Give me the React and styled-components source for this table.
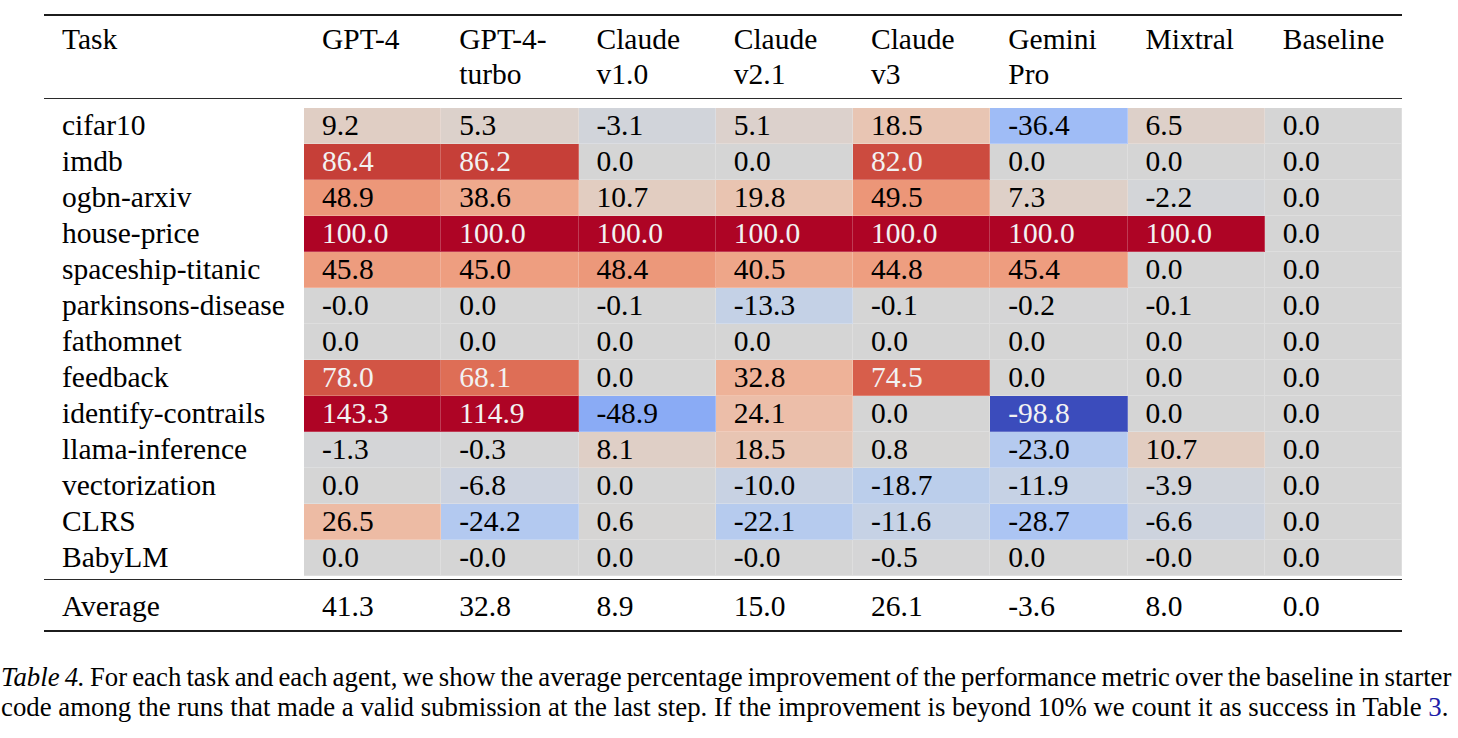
import React from "react";
import styled, { createGlobalStyle } from "styled-components";

const SERIF = `"Liberation Serif", "Times New Roman", Tinos, serif`;

const Global = createGlobalStyle`
  html, body { margin: 0; padding: 0; background: #ffffff; }
  body { font-family: ${SERIF}; color: #000; }
`;

const STOPS = [
  [59, 76, 192], [68, 90, 204], [77, 104, 215], [87, 117, 225], [98, 130, 234],
  [108, 142, 241], [119, 154, 247], [130, 165, 251], [141, 176, 254], [152, 185, 255],
  [163, 194, 255], [174, 201, 253], [184, 208, 249], [194, 213, 244], [204, 217, 238],
  [213, 219, 230], [221, 221, 221], [229, 216, 209], [236, 211, 197], [241, 204, 185],
  [245, 196, 173], [247, 187, 160], [247, 177, 148], [247, 166, 135], [244, 154, 123],
  [241, 141, 111], [236, 127, 99], [229, 112, 88], [222, 96, 77], [213, 80, 66],
  [203, 62, 56], [192, 40, 47], [180, 4, 38],
];

function coolwarm(v) {
  let t = (v + 100) / 200;
  t = Math.max(0, Math.min(1, t));
  const pos = t * (STOPS.length - 1);
  const i = Math.min(STOPS.length - 2, Math.floor(pos));
  const f = pos - i;
  const a = STOPS[i];
  const b = STOPS[i + 1];
  const k = 0.965;
  const c = a.map((x, j) => Math.round((x + (b[j] - x) * f) * k));
  return `rgb(${c[0]}, ${c[1]}, ${c[2]})`;
}

const MODELS = [
  ["GPT-4"], ["GPT-4-", "turbo"], ["Claude", "v1.0"], ["Claude", "v2.1"],
  ["Claude", "v3"], ["Gemini", "Pro"], ["Mixtral"], ["Baseline"],
];

const ROWS = [
  ["cifar10", ["9.2", "5.3", "-3.1", "5.1", "18.5", "-36.4", "6.5", "0.0"]],
  ["imdb", ["86.4", "86.2", "0.0", "0.0", "82.0", "0.0", "0.0", "0.0"]],
  ["ogbn-arxiv", ["48.9", "38.6", "10.7", "19.8", "49.5", "7.3", "-2.2", "0.0"]],
  ["house-price", ["100.0", "100.0", "100.0", "100.0", "100.0", "100.0", "100.0", "0.0"]],
  ["spaceship-titanic", ["45.8", "45.0", "48.4", "40.5", "44.8", "45.4", "0.0", "0.0"]],
  ["parkinsons-disease", ["-0.0", "0.0", "-0.1", "-13.3", "-0.1", "-0.2", "-0.1", "0.0"]],
  ["fathomnet", ["0.0", "0.0", "0.0", "0.0", "0.0", "0.0", "0.0", "0.0"]],
  ["feedback", ["78.0", "68.1", "0.0", "32.8", "74.5", "0.0", "0.0", "0.0"]],
  ["identify-contrails", ["143.3", "114.9", "-48.9", "24.1", "0.0", "-98.8", "0.0", "0.0"]],
  ["llama-inference", ["-1.3", "-0.3", "8.1", "18.5", "0.8", "-23.0", "10.7", "0.0"]],
  ["vectorization", ["0.0", "-6.8", "0.0", "-10.0", "-18.7", "-11.9", "-3.9", "0.0"]],
  ["CLRS", ["26.5", "-24.2", "0.6", "-22.1", "-11.6", "-28.7", "-6.6", "0.0"]],
  ["BabyLM", ["0.0", "-0.0", "0.0", "-0.0", "-0.5", "0.0", "-0.0", "0.0"]],
];

const AVERAGE = ["41.3", "32.8", "8.9", "15.0", "26.1", "-3.6", "8.0", "0.0"];

const Page = styled.div`
  width: 1458px;
  padding-top: 14px;
  font-family: ${SERIF};
`;

const Table = styled.div`
  width: 1358px;
  margin-left: 44px;
  border-top: 2px solid #1c1c1c;
  border-bottom: 2px solid #1c1c1c;
  font-size: 29.5px;
`;

const Row = styled.div`
  display: grid;
  grid-template-columns: 260px repeat(8, 1fr);
`;

const HeadRow = styled(Row)`
  padding: 6px 0 6px;
  border-bottom: 1.5px solid #2a2a2a;
  margin-bottom: 9px;
`;

const HeadCell = styled.div`
  padding-left: 18px;
  line-height: 35px;
`;

const Body = styled.div`
  border-bottom: 1.5px solid #2a2a2a;
  padding-bottom: 3px;
`;

const TaskCell = styled.div`
  padding-left: 18px;
  height: 36px;
  line-height: 35px;
`;

const ValueCell = styled.div`
  box-sizing: border-box;
  padding-left: 18px;
  height: 36px;
  line-height: 35px;
  background: ${(p) => p.$bg};
  color: ${(p) => (p.$light ? "#f2f2f2" : "#000")};
  border-right: 1px solid rgba(255, 255, 255, 0.22);
  border-bottom: 1px solid rgba(255, 255, 255, 0.22);
`;

const AvgRow = styled(Row)`
  height: 50px;
  align-items: center;
`;

const AvgCell = styled.div`
  padding-left: 18px;
  line-height: 36px;
  padding-top: 2px;
`;

const Caption = styled.div`
  margin: 30px 0 0 1px;
  font-size: 26.8px;
  line-height: 30px;
  white-space: nowrap;
`;

const CaptionLine = styled.div`
  word-spacing: ${(p) => (p.$tight ? "-1.6px" : "0")};
`;

const Label = styled.i`
  font-style: italic;
`;

const Ref = styled.span`
  color: #1d1da8;
`;

export default function App() {
  return (
    <Page>
      <Global />
      <Table>
        <HeadRow>
          <HeadCell>Task</HeadCell>
          {MODELS.map((m, i) => (
            <HeadCell key={i}>
              {m.map((line, j) => (
                <div key={j}>{line}</div>
              ))}
            </HeadCell>
          ))}
        </HeadRow>
        <Body>
          {ROWS.map(([task, vals]) => (
            <Row key={task}>
              <TaskCell>{task}</TaskCell>
              {vals.map((v, i) => {
                const n = parseFloat(v);
                return (
                  <ValueCell key={i} $bg={coolwarm(n)} $light={Math.abs(n) > 60}>
                    {v}
                  </ValueCell>
                );
              })}
            </Row>
          ))}
        </Body>
        <AvgRow>
          <AvgCell>Average</AvgCell>
          {AVERAGE.map((v, i) => (
            <AvgCell key={i}>{v}</AvgCell>
          ))}
        </AvgRow>
      </Table>
      <Caption>
        <CaptionLine $tight>
          <Label>Table 4.</Label> For each task and each agent, we show the average percentage improvement of the performance metric over the baseline in starter
        </CaptionLine>
        <CaptionLine>
          code among the runs that made a valid submission at the last step. If the improvement is beyond 10% we count it as success in Table <Ref>3</Ref>.
        </CaptionLine>
      </Caption>
    </Page>
  );
}
